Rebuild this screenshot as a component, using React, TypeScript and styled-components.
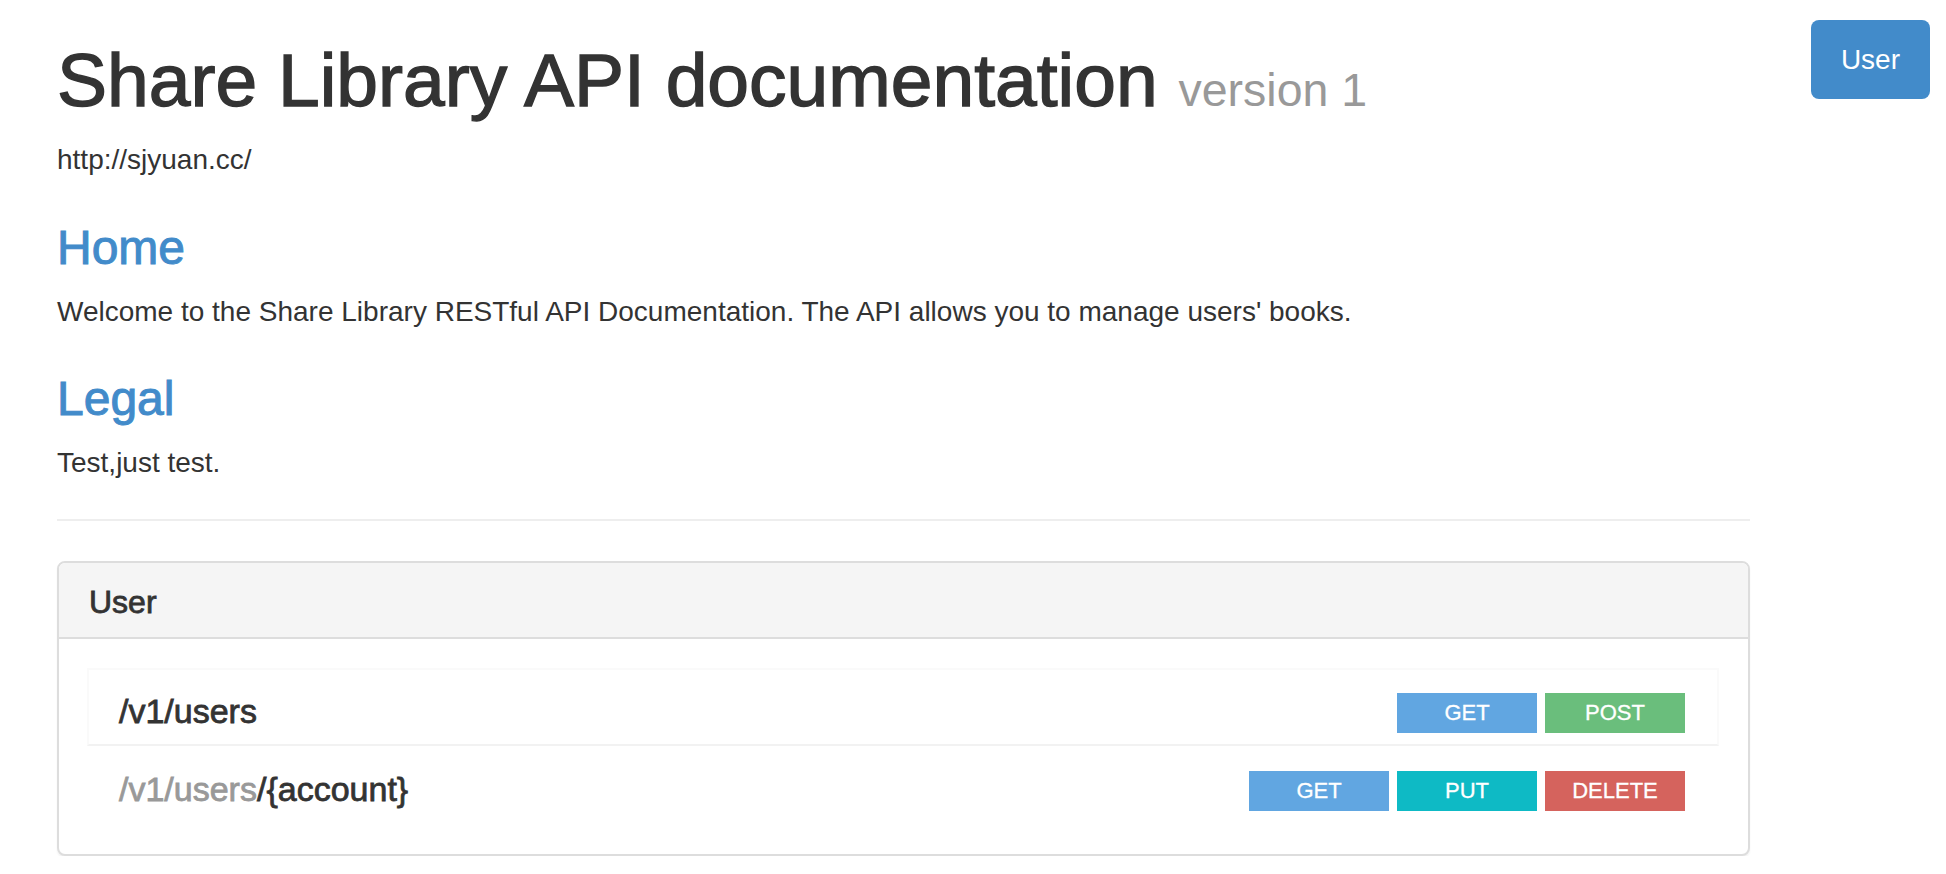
import React from "react";
import styled, { createGlobalStyle } from "styled-components";

const Global = createGlobalStyle`
  html, body {
    margin: 0;
    padding: 0;
    background: #ffffff;
  }
  body {
    font-family: "Liberation Sans", Arial, Helvetica, sans-serif;
    font-size: 28px;
    line-height: 40px;
    color: #333333;
  }
  * { box-sizing: border-box; }
`;

const Page = styled.div`
  display: flex;
  align-items: flex-start;
  padding: 0 16px 0 57px;
`;

const Main = styled.main`
  width: 1693px;
  flex: none;
  display: flex;
  flex-direction: column;
`;

const Side = styled.aside`
  flex: 1;
  display: flex;
  justify-content: flex-end;
  padding-top: 20px;
`;

const NavButton = styled.a`
  display: inline-block;
  height: 79px;
  padding: 0 30px;
  line-height: 79px;
  font-size: 28px;
  color: #ffffff;
  background: #428bca;
  border-radius: 8px;
  text-decoration: none;
  cursor: pointer;
`;

const Title = styled.h1`
  margin: 41px 0 10px;
  font-size: 75px;
  line-height: 79px;
  font-weight: 500;
  -webkit-text-stroke: 1.4px currentColor;
  color: #333333;
  white-space: nowrap;
`;

const Version = styled.small`
  font-size: 46.5px;
  font-weight: 400;
  -webkit-text-stroke: 0;
  color: #999999;
`;

const Text = styled.p<{ $gap?: number }>`
  margin: 0;
  margin-bottom: ${(p) => p.$gap ?? 0}px;
  font-size: 28px;
  line-height: 40px;
`;

const SectionHeading = styled.h3`
  margin: 0 0 18px;
  font-size: 48px;
  line-height: 53px;
  font-weight: 500;
  -webkit-text-stroke: 1px currentColor;
  color: #428bca;
`;

const Divider = styled.hr`
  margin: 36px 0 40px;
  border: 0;
  border-top: 2px solid #eeeeee;
  height: 0;
`;

const Panel = styled.section`
  border: 2px solid #dddddd;
  border-radius: 8px;
  background: #ffffff;
  box-shadow: 0 2px 2px rgba(0, 0, 0, 0.05);
  overflow: hidden;
`;

const PanelHeading = styled.h3`
  margin: 0;
  padding: 22px 30px 17px;
  background: #f5f5f5;
  border-bottom: 2px solid #dddddd;
  font-size: 32px;
  line-height: 35px;
  font-weight: 500;
  -webkit-text-stroke: 0.8px currentColor;
  color: #333333;
`;

const PanelBody = styled.div`
  padding: 29px 29px 30px 28px;
  display: flex;
  flex-direction: column;
`;

const Resource = styled.div<{ $highlighted?: boolean }>`
  display: flex;
  justify-content: space-between;
  align-items: flex-start;
  padding: 23px 32px 11px 30px;
  border: 2px solid ${(p) => (p.$highlighted ? "#fafafa" : "transparent")};
  border-bottom-color: ${(p) => (p.$highlighted ? "#f2f2f2" : "transparent")};
`;

const ResourcePath = styled.h4`
  margin: -2px 0 0;
  font-size: 34px;
  line-height: 40px;
  font-weight: 500;
  -webkit-text-stroke: 0.8px currentColor;
  color: #333333;
`;

const PathParent = styled.span`
  color: #999999;
`;

const Methods = styled.div`
  display: flex;
  gap: 8px;
`;

const methodColors: Record<string, string> = {
  GET: "#61a6e1",
  POST: "#6abe7c",
  PUT: "#0ebac5",
  DELETE: "#d5635d",
};

const MethodBadge = styled.a<{ $method: string }>`
  display: block;
  width: 140px;
  height: 40px;
  line-height: 40px;
  text-align: center;
  font-size: 22px;
  -webkit-text-stroke: 0.3px currentColor;
  color: #ffffff;
  background: ${(p) => methodColors[p.$method]};
  text-decoration: none;
  cursor: pointer;
`;

const resources = [
  { parent: "", path: "/v1/users", methods: ["GET", "POST"], highlighted: true },
  { parent: "/v1/users", path: "/{account}", methods: ["GET", "PUT", "DELETE"], highlighted: false },
];

export default function App() {
  return (
    <>
      <Global />
      <Page>
        <Main>
          <Title>
            Share Library API documentation <Version>version 1</Version>
          </Title>
          <Text $gap={41}>http://sjyuan.cc/</Text>
          <SectionHeading>Home</SectionHeading>
          <Text $gap={40}>
            Welcome to the Share Library RESTful API Documentation. The API allows you to manage users' books.
          </Text>
          <SectionHeading>Legal</SectionHeading>
          <Text>Test,just test.</Text>
          <Divider />
          <Panel>
            <PanelHeading>User</PanelHeading>
            <PanelBody>
              {resources.map((r) => (
                <Resource key={r.parent + r.path} $highlighted={r.highlighted}>
                  <ResourcePath>
                    {r.parent && <PathParent>{r.parent}</PathParent>}
                    {r.path}
                  </ResourcePath>
                  <Methods>
                    {r.methods.map((m) => (
                      <MethodBadge key={m} $method={m}>
                        {m}
                      </MethodBadge>
                    ))}
                  </Methods>
                </Resource>
              ))}
            </PanelBody>
          </Panel>
        </Main>
        <Side>
          <NavButton>User</NavButton>
        </Side>
      </Page>
    </>
  );
}
